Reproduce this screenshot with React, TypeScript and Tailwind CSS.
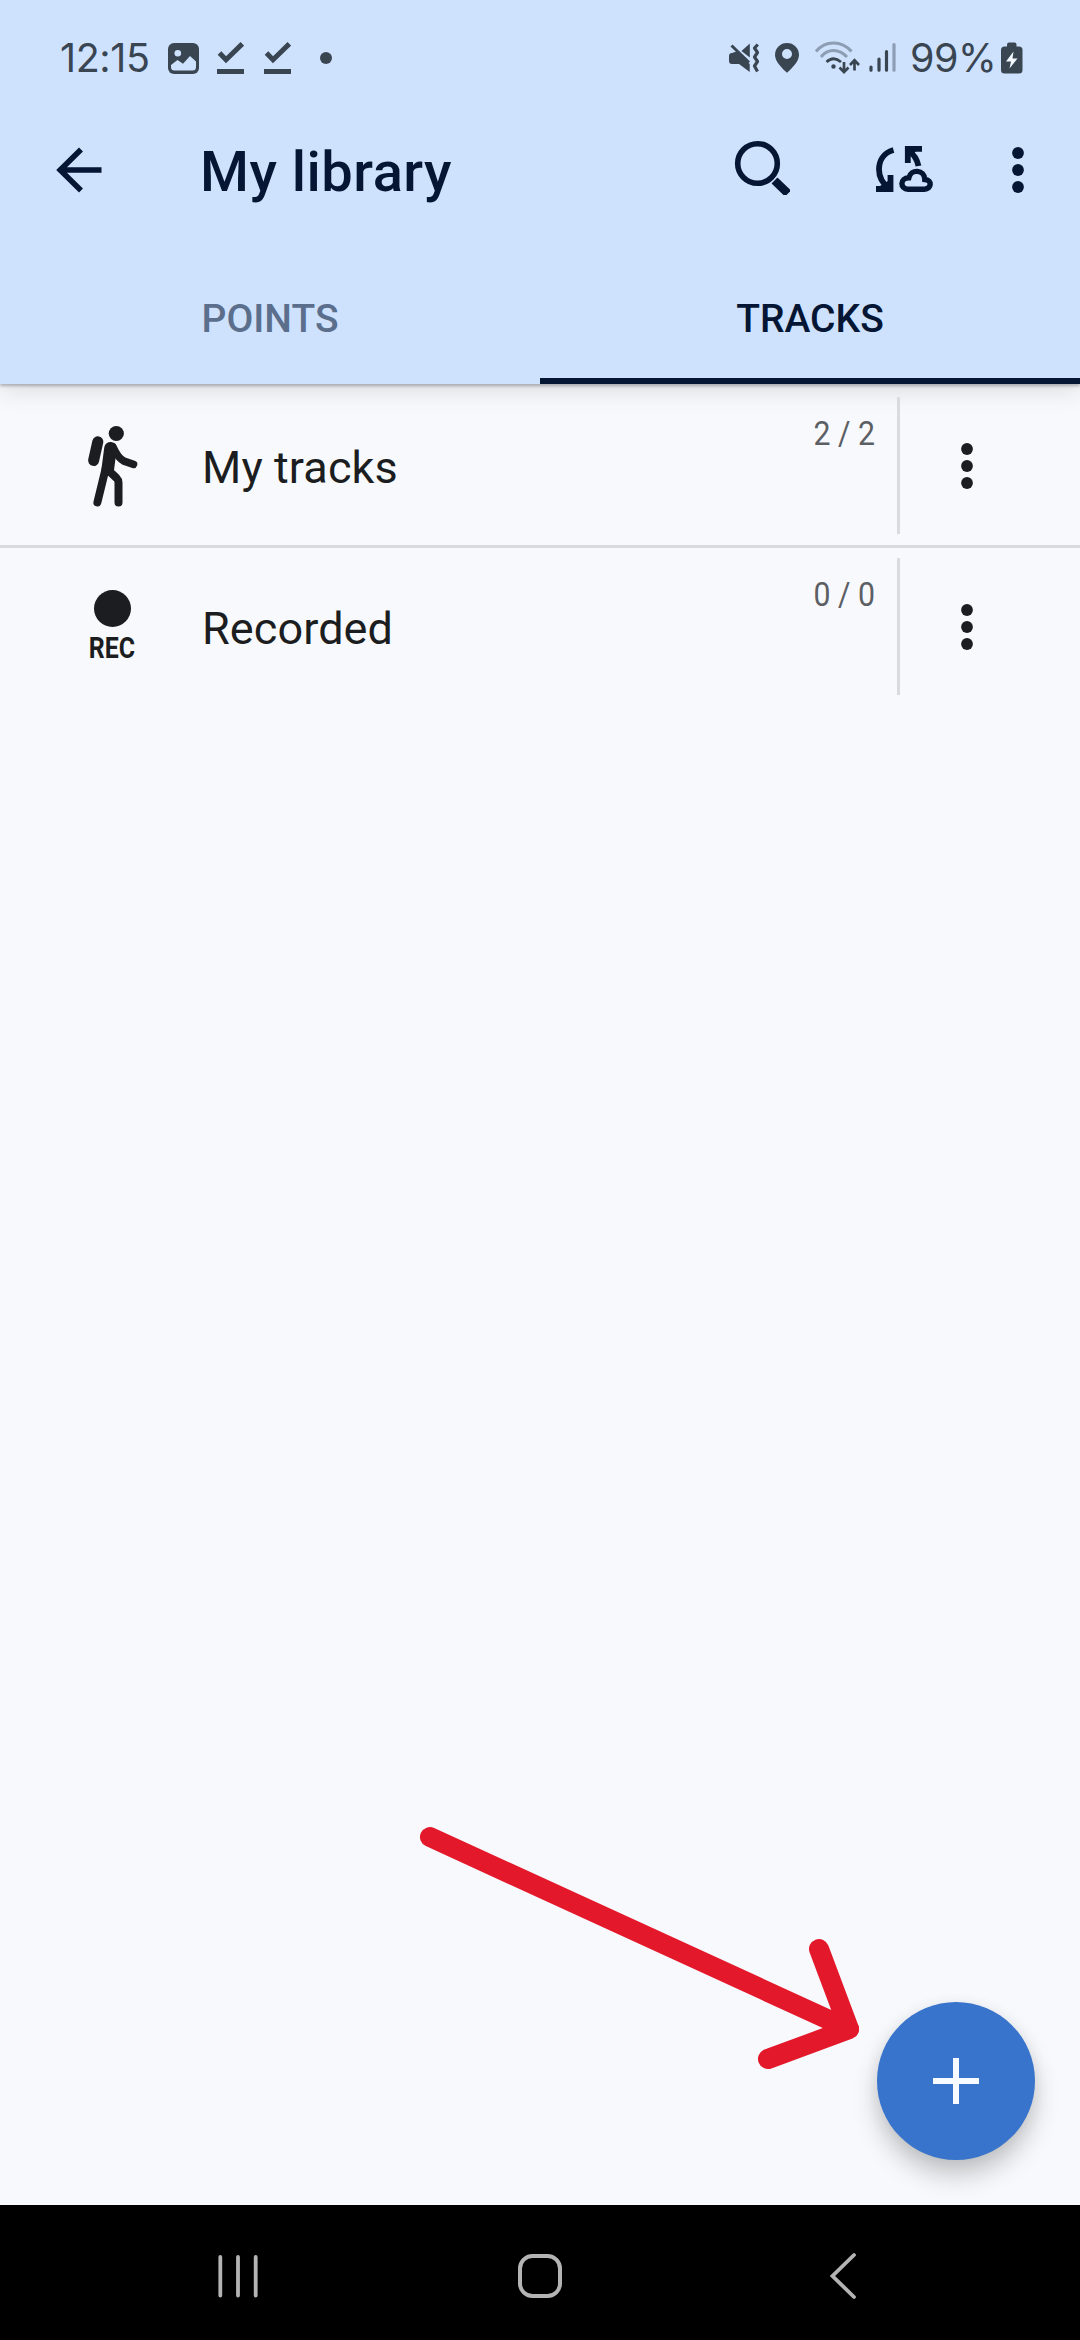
import type { ReactNode } from 'react'

const folders = [
  { name: 'My tracks', count: '2 / 2', icon: <HikerIcon /> },
  { name: 'Recorded', count: '0 / 0', icon: <RecIcon /> },
]

function MoreIcon({ className }: { className: string }) {
  return (
    <svg className={className} viewBox="0 0 12 46" fill="currentColor">
      <circle cx="6" cy="6" r="5.9" />
      <circle cx="6" cy="23" r="5.9" />
      <circle cx="6" cy="40" r="5.9" />
    </svg>
  )
}

function HikerIcon() {
  return (
    <svg className="h-[84px] w-[54px]" viewBox="85 424 54 84" fill="none" stroke="currentColor" strokeLinecap="round" strokeLinejoin="round">
      <circle cx="116.3" cy="433.5" r="7.6" fill="currentColor" stroke="none" />
      <path d="M97.8 441.8 93.6 460.5" strokeWidth="11" />
      <path d="M110.5 448.2 107.8 469" strokeWidth="12.6" />
      <path d="M113 447Q118 458 124 461.2L133.5 464.4" strokeWidth="7.6" />
      <path d="M105.8 468 97.4 502.4" strokeWidth="8" />
      <path d="M108 470 116.5 478Q118.5 480 118.5 482.5V502.4" strokeWidth="8" />
    </svg>
  )
}

function RecIcon() {
  return (
    <div className="flex w-[54px] flex-col items-center pt-px">
      <div className="mt-1 size-[37px] rounded-full bg-[#1b1d20]" />
      <span className="mt-1 scale-x-[0.83] text-[30px] leading-[34px] font-bold">REC</span>
    </div>
  )
}

function CheckIcon() {
  return (
    <svg className="h-[34px] w-[27px]" viewBox="217 41 27 34" fill="none" stroke="currentColor" strokeWidth="5">
      <path d="M219.5 53 226 59.8 242.3 43.8" />
      <path d="M217 71.5H244" />
    </svg>
  )
}

function StatusBar() {
  return (
    <div className="flex h-[116px] justify-between pr-[57px] pl-[60px] text-[#3a4552]">
      <div className="flex items-start pt-[41px]">
        <span className="-mt-[7px] w-[108px] font-[Inter] text-[39.5px] leading-[48px] font-normal tracking-[-0.4px]">12:15</span>
        <svg className="h-[34px] w-[31px]" viewBox="168 41 31 34">
          <rect x="168" y="43" width="31" height="31" rx="6" fill="currentColor" />
          <circle cx="177.8" cy="53.2" r="3.3" fill="#cee2fe" />
          <path d="M171 65 177.5 60 183 63.8 190 56 196 61.5V67Q196 70.5 192.5 70.5H174.5Q171 70.5 171 67Z" fill="#cee2fe" />
        </svg>
        <div className="ml-[18px] flex gap-5">
          <CheckIcon />
          <CheckIcon />
        </div>
        <div className="mt-[11px] ml-[29px] size-3 rounded-full bg-current" />
      </div>
      <div className="flex items-start pt-[41px]">
        <svg className="h-[34px] w-[31px]" viewBox="728 41 31 34" fill="currentColor">
          <path d="M728 56Q728 53 731 53L735.5 51.5 748.7 64V72L738 64H731Q728 64 728 61Z" />
          <path d="M740.5 51 748.8 43.5V57.5Z" />
          <path d="M730.5 45.500 748 62.5" stroke="currentColor" strokeWidth="3" />
          <path d="M756.8 44.5 753.5 48 756.5 52.5 753.5 57 756.5 61.5 753.5 66 756.5 71.5" fill="none" stroke="currentColor" strokeWidth="3.2" strokeLinejoin="round" />
        </svg>
        <svg className="ml-[15px] h-[34px] w-6" viewBox="774 41 24 34" fill="currentColor" fillRule="evenodd">
          <path d="M786 43A11.9 11.9 0 0 0 774 55C774 62 782 69 786 72.8C790 69 798 62 798 55A11.9 11.9 0 0 0 786 43ZM786 49A5 5 0 1 1 786 59A5 5 0 1 1 786 49Z" />
        </svg>
        <svg className="ml-[15px] h-[34px] w-[46px]" viewBox="813 41 46 34" fill="none" stroke="currentColor" strokeWidth="2.8">
          <path d="M815 51.5Q822 43 832.5 43T850.5 51.5M820 57Q825 50.5 832.5 50.5T846 57" stroke="#8c9db4" strokeWidth="3" />
          <path d="M825.5 62Q832.5 55.5 840 62" />
          <circle cx="832.5" cy="66.5" r="2.2" fill="currentColor" stroke="none" />
          <path d="M843 62V72M838.5 67.5 843 72 847.5 67.5M853.5 70.5V60M849 65 853.5 60.3 858 65" strokeWidth="2.7" />
        </svg>
        <svg className="ml-2 h-[34px] w-[30px]" viewBox="867 41 30 34" fill="none" stroke="currentColor" strokeWidth="3.2" strokeLinecap="round">
          <path d="M870 67V70.2M878 59V70.2M885.5 51.5V70.2" />
          <path d="M893 44.5V70.2" stroke="#8c9db4" />
        </svg>
        <span className="-mt-[7px] ml-[12px] w-[91px] font-[Inter] text-[39.5px] leading-[48px] font-normal tracking-[-0.5px]">99%</span>
        <svg className="h-[34px] w-[22px]" viewBox="1000 41 22 34" fill="currentColor">
          <rect x="1000" y="46.5" width="21.5" height="27" rx="3.5" />
          <rect x="1006" y="42.5" width="9.5" height="7" rx="2" />
          <path d="M1012.5 51.5 1005 61.5H1010L1008.5 68.5 1016.5 58.5H1011.5Z" fill="#f3f8ff" />
        </svg>
      </div>
    </div>
  )
}

function Toolbar() {
  return (
    <div className="flex h-[110px] items-start pr-14 pl-[55px]">
      <svg className="mt-[30px] h-12 w-12" viewBox="55 146 48 48" fill="none" stroke="currentColor" strokeWidth="5.6">
        <path d="M81 149.500 60.200 170 81 190.500M59 170H101.500" />
      </svg>
      <h1 className="mt-[23px] ml-[97px] flex-1 text-[56px] leading-[66px] font-medium tracking-[0.5px]">My library</h1>
      <svg className="mt-[23px] h-14 w-14" viewBox="734 139 56 56" fill="none" stroke="currentColor">
        <circle cx="757.5" cy="163.5" r="19.8" strokeWidth="5.6" />
        <path d="M774.5 180.5 788 193.5" strokeWidth="8.5" />
      </svg>
      <svg className="mt-[28px] ml-[85px] h-[50px] w-[60px]" viewBox="875 144 60 50" fill="none" stroke="currentColor" strokeWidth="5.8">
        <path d="M893.5 150C883 153 879 161.5 879 169.5C879 178 883 184 889.5 189" />
        <path d="M876 189H890.5V175" />
        <path d="M922 148.8H907.8V163" />
        <path d="M908 150Q916.5 156 918.5 166" />
        <path d="M876 192H893V186L888 181 880 186ZM905 146V155L912 156 916 151V146Z" fill="currentColor" stroke="none" />
        <path d="M908 189.2H924.5C931.5 189.2 932.5 180 924.8 179.5C924.5 169.5 911 168.5 908.8 177.8C899.5 178 900 189.2 908 189.2Z" strokeWidth="5.4" />
      </svg>
      <MoreIcon className="mt-[31px] ml-[77px] h-[46px] w-3" />
    </div>
  )
}

function Tab({ active, children }: { active?: boolean; children: ReactNode }) {
  return (
    <div
      className={
        'flex h-[158px] flex-1 items-center justify-center border-b-[6px] pt-[33px] text-[39px] leading-[46px] font-medium ' +
        (active ? 'border-[#041633]' : 'border-transparent text-[#5b6f8c]')
      }
    >
      {children}
    </div>
  )
}

export default function App() {
  return (
    <div className="relative flex h-[2340px] w-[1080px] flex-col overflow-hidden bg-[#f7f9fc] font-[Roboto,sans-serif] text-[#1b1d20]">
      <header className="bg-[#cee2fe] text-[#041633] shadow-[0_2px_3px_rgba(60,55,75,0.35),0_6px_24px_rgba(0,0,0,0.12)]">
        <StatusBar />
        <Toolbar />
        <div className="flex">
          <Tab>POINTS</Tab>
          <Tab active>TRACKS</Tab>
        </div>
      </header>

      <main className="flex-1 pt-[3px]">
        {folders.map((f) => (
          <div key={f.name} className="flex h-[161px] items-start border-b-[3px] border-[#d9dbe0] last:border-transparent">
            <div className="ml-[85px] w-[54px] pt-[37px]">{f.icon}</div>
            <div className="mt-[55px] ml-[63px] flex-1 text-[45px] leading-[52px] tracking-[0.1px]">{f.name}</div>
            <span className="mt-[26px] mr-[22px] origin-right scale-x-[0.89] text-[34px] leading-10 text-[#5c5f63]">{f.count}</span>
            <div className="mt-[10px] h-[137px] w-[3px] bg-[#d9dbe0]" />
            <MoreIcon className="mt-14 mr-[107px] ml-[61px] h-[46px] w-3" />
          </div>
        ))}
      </main>

      <svg className="absolute top-[1820px] left-[410px] h-[260px] w-[460px]" viewBox="410 1820 460 260" fill="none" stroke="#e4182b" strokeWidth="20" strokeLinecap="round" strokeLinejoin="round">
        <path d="M430 1837 849 2029" />
        <path d="M819 1949 849 2029 768 2059" />
      </svg>

      <button className="absolute top-[2002px] left-[877px] flex size-[158px] items-center justify-center rounded-full bg-[#3874cb] shadow-[0_16px_26px_rgba(0,0,0,0.2),0_3px_16px_rgba(0,0,0,0.07)]">
        <svg className="size-[46px]" viewBox="0 0 46 46" stroke="#f7fbff" strokeWidth="6">
          <path d="M23 0V46M0 23H46" />
        </svg>
      </button>

      <nav className="relative flex h-[135px] items-start bg-black pt-12 text-[#b4b4b4]">
        <svg className="ml-[217px] h-[46px] w-[42px]" viewBox="217 2253 42 46" fill="none" stroke="currentColor" strokeWidth="3.8" strokeLinecap="round">
          <path d="M220.3 2257V2295.5M238 2257V2295.5M255.7 2257V2295.5" />
        </svg>
        <svg className="ml-[258px] h-[46px] w-[46px]" viewBox="517 2253 46 46" fill="none" stroke="currentColor" strokeWidth="4">
          <rect x="520" y="2256" width="40" height="40" rx="12.5" />
        </svg>
        <svg className="ml-[266px] h-[50px] w-[30px] -translate-y-0.5" viewBox="829 2251 30 50" fill="none" stroke="currentColor" strokeWidth="3.8" strokeLinecap="round">
          <path d="M854 2255 832.5 2276 854 2297" />
        </svg>
      </nav>
    </div>
  )
}
